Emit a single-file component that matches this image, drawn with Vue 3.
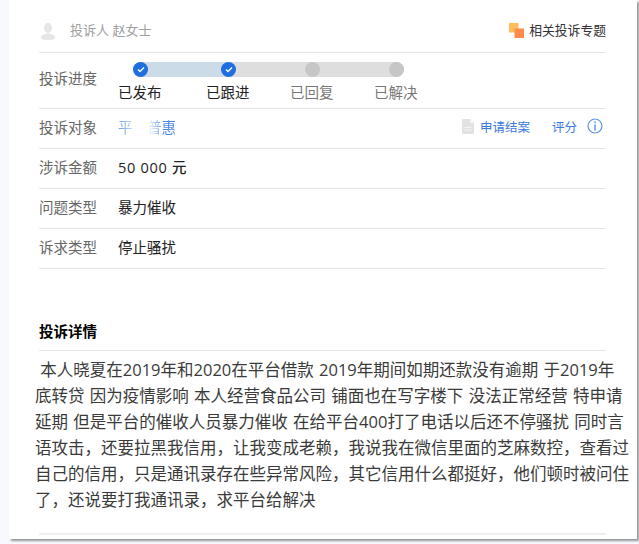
<template>
  <div class="page">
    <div class="card">
      <div class="user_row">
        <div class="user">
          <svg class="avatar" width="16" height="17" viewBox="0 0 16 17">
            <ellipse cx="8" cy="5" rx="4" ry="5" fill="#e6e6e6" />
            <path d="M1 15c0-3 3.500-4.500 7-4.500s7 1.500 7 4.500c0 1-3 2-7 2s-7-1-7-2z" fill="#e6e6e6" />
          </svg>
          <span class="user_text">投诉人 赵女士</span>
        </div>
        <a class="topic" href="#">
          <svg width="15" height="15" viewBox="0 0 15 15">
            <rect x="0" y="0" width="9.500" height="9.500" fill="#ffbd5a" />
            <rect x="5.500" y="5.500" width="9.500" height="9.500" fill="#ff8a4c" />
          </svg>
          <span class="topic_text">相关投诉专题</span>
        </a>
      </div>

      <div class="row progress_row">
        <div class="label">投诉进度</div>
        <div class="steps">
          <div class="track">
            <div class="track_done"></div>
            <span v-for="step in steps" :key="step.name" class="dot" :class="{ on: step.done }">
              <svg v-if="step.done" width="8" height="7" viewBox="0 0 8 7">
                <path d="M1 3.500l2 2 4-4" fill="none" stroke="#fff" stroke-width="1.300" />
              </svg>
            </span>
          </div>
          <div class="names">
            <span v-for="step in steps" :key="step.name" :class="{ on: step.done }">{{ step.name }}</span>
          </div>
        </div>
      </div>

      <div class="row">
        <div class="label">投诉对象</div>
        <div class="value target">平　普惠</div>
        <div class="actions">
          <svg width="12" height="15" viewBox="0 0 12 15">
            <path d="M1 0h7l4 4v10a1 1 0 0 1-1 1H1a1 1 0 0 1-1-1V1a1 1 0 0 1 1-1z" fill="#e2e2e2" />
            <path d="M8 0l4 4H8z" fill="#f4f4f4" />
            <path d="M2.500 8.500h7M2.500 11h7" stroke="#f4f4f4" />
          </svg>
          <a class="apply" href="#">申请结案</a>
          <a class="rate" href="#">评分</a>
          <svg width="16" height="16" viewBox="0 0 16 16">
            <circle cx="8" cy="8" r="7" fill="none" stroke="#5a94ec" stroke-width="1.200" />
            <rect x="7.300" y="3.500" width="1.500" height="1.700" fill="#5a94ec" />
            <rect x="7.300" y="6.500" width="1.500" height="6" fill="#5a94ec" />
          </svg>
        </div>
      </div>

      <div v-for="item in fields" :key="item.label" class="row">
        <div class="label">{{ item.label }}</div>
        <div class="value" :class="{ amount: item.amount }">{{ item.value }}</div>
      </div>

      <h3 class="title">投诉详情</h3>
      <p class="detail">&nbsp;本人晓夏在2019年和2020在平台借款 2019年期间如期还款没有逾期 于2019年底转贷 因为疫情影响 本人经营食品公司 铺面也在写字楼下 没法正常经营 特申请延期 但是平台的催收人员暴力催收 在给平台400打了电话以后还不停骚扰 同时言语攻击，还要拉黑我信用，让我变成老赖，我说我在微信里面的芝麻数控，查看过自己的信用，只是通讯录存在些异常风险，其它信用什么都挺好，他们顿时被问住了，还说要打我通讯录，求平台给解决</p>
      <div class="bottom_line"></div>
    </div>
  </div>
</template>

<script setup>
const steps = [
  { name: "已发布", done: true },
  { name: "已跟进", done: true },
  { name: "已回复", done: false },
  { name: "已解决", done: false },
];

const fields = [
  { label: "涉诉金额", value: "50 000 元", amount: true },
  { label: "问题类型", value: "暴力催收" },
  { label: "诉求类型", value: "停止骚扰" },
];
</script>

<style>
html,
body {
  margin: 0;
  background: #f7f9fe;
  overflow: hidden;
}
</style>

<style scoped>
.page {
  width: 639px;
  height: 544px;
  padding-left: 9px;
  box-sizing: border-box;
  font-family: "Open Sans", "Noto Sans CJK SC", sans-serif;
  overflow: hidden;
}

.card {
  width: 628px;
  height: 539px;
  padding: 0 31px 0 30px;
  box-sizing: border-box;
  background: #fff;
  box-shadow: 2px 2px 2px rgba(0, 0, 0, 0.4);
}

.user_row {
  height: 53px;
  display: flex;
  align-items: center;
  justify-content: space-between;
  padding-top: 8px;
  box-sizing: border-box;
  border-bottom: 1px solid #e6e6e6;
}

.user {
  display: flex;
  align-items: center;
  gap: 14px;
  font-size: 13px;
  color: #a0a0a0;
}

.user_text {
  margin-bottom: 2px;
}

.avatar {
  margin: 3px 0 0 1px;
}

.topic {
  display: flex;
  align-items: center;
  gap: 5px;
  font-size: 12.800px;
  color: #333;
  text-decoration: none;
}

.topic_text {
  margin-bottom: 2px;
}

.row {
  height: 40px;
  display: flex;
  align-items: center;
  padding-bottom: 5px;
  box-sizing: border-box;
  border-bottom: 1px solid #e6e6e6;
}

.progress_row {
  height: 56px;
  padding-bottom: 0;
}

.progress_row .label {
  margin-bottom: 6px;
}

.label {
  width: 79px;
  flex-shrink: 0;
  font-size: 14.500px;
  color: #666;
}

.value {
  font-size: 14.500px;
  color: #222;
}

.amount {
  letter-spacing: 0.700px;
  font-weight: 500;
}

.target {
  background: linear-gradient(90deg, #6a9eee 0, #c4d8f8 15px, #fff 18px, #fff 30px, #4b86e4 46px);
  -webkit-background-clip: text;
  background-clip: text;
  color: transparent;
}

.actions {
  margin-left: auto;
  margin-right: 3px;
  display: flex;
  align-items: center;
  font-size: 12.500px;
}

.actions a {
  color: #3a78e0;
  text-decoration: none;
}

.apply {
  margin-left: 6px;
}

.rate {
  margin: 0 10px 0 22px;
}

.steps {
  align-self: flex-start;
}

.track {
  position: relative;
  margin: 9px 0 0 15px;
  width: 271px;
  height: 15px;
  border-radius: 8px;
  background: #dedede;
  display: flex;
}

.track_done {
  position: absolute;
  left: 0;
  top: 0;
  width: 95px;
  height: 15px;
  border-radius: 8px 0 0 8px;
  background: #cbdbe8;
}

.dot {
  position: relative;
  width: 15px;
  height: 15px;
  margin-left: 69px;
  border-radius: 50%;
  background: #c6c6c6;
  display: flex;
  align-items: center;
  justify-content: center;
}

.dot:nth-of-type(1) {
  margin-left: 0;
}

.dot:nth-of-type(2) {
  margin-left: 73px;
}

.dot.on {
  background: #1f6fe0;
}

.names {
  display: flex;
  margin-top: 6px;
  font-size: 14.500px;
  line-height: 20px;
  color: #777;
}

.names span {
  margin-left: 40.500px;
}

.names span:first-child {
  margin-left: 0;
}

.names span:nth-child(2) {
  margin-left: 44.500px;
}

.names .on {
  color: #222;
}

.title {
  margin: 53px 0 0;
  padding-bottom: 8px;
  font-size: 14.500px;
  line-height: 20px;
  font-weight: 700;
  color: #000;
  border-bottom: 1px solid #e6e6e6;
}

.detail {
  margin: 6px 0 0 -4px;
  width: 595px;
  font-size: 16.500px;
  line-height: 26px;
  word-spacing: 1px;
  color: #3a3a3a;
}

.bottom_line {
  margin-top: 20px;
  height: 2px;
  background: #f0f0f0;
}
</style>
